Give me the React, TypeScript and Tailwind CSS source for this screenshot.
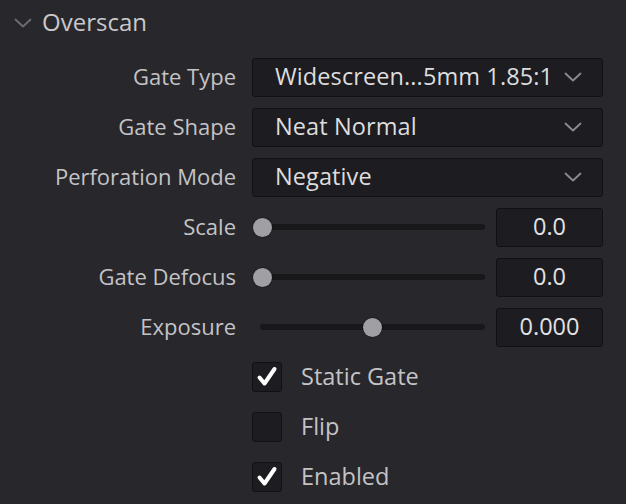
const font = { fontFamily: '"Open Sans", "Noto Sans", sans-serif' };

const Chevron = ({ className }: { className?: string }) => (
  <svg viewBox="0 0 18 10" width="18" height="10" className={className} fill="none" stroke="currentColor" strokeWidth="1.8" strokeLinecap="round" strokeLinejoin="round">
    <path d="M1.5 1.5 L9 8.5 L16.5 1.5" />
  </svg>
);

const Check = () => (
  <svg viewBox="0 0 24 24" width="24" height="24" fill="none" stroke="white" strokeWidth="4" strokeLinecap="round" strokeLinejoin="round">
    <path d="M4.5 12.5 L9.5 18.5 L19.5 4" />
  </svg>
);

const Label = ({ text }: { text: string }) => (
  <div className="w-[236px] shrink-0 -mt-[2px] text-right text-[22px] text-[#c4c3c6]">{text}</div>
);

const Select = ({ value }: { value: string }) => (
  <div className="flex h-[39px] w-[351px] items-center justify-between rounded-[3px] border border-[#111013] bg-[#1d1c20] pl-[22px] pr-[20px]">
    <span className="text-[23.5px] tracking-[0.1px] text-[#dddcdf] whitespace-nowrap">{value}</span>
    <Chevron className="text-[#8c8b8f]" />
  </div>
);

const Slider = ({ pos, value, inset }: { pos: number; value: string; inset?: boolean }) => (
  <div className="flex w-[351px] items-center justify-between">
    <div className="relative flex h-[20px] w-[234px] items-center">
      <div className={`h-[6px] rounded-full bg-[#18171a] ${inset ? "ml-[8px] w-[225px]" : "ml-[3px] w-[230px]"}`} />
      <div
        className="absolute top-[0.5px] h-[19px] w-[19px] rounded-full bg-[#a09fa4] shadow-[0_0_2px_rgba(0,0,0,0.6)]"
        style={{ left: pos }}
      />
    </div>
    <div className="flex h-[39px] w-[107px] items-center justify-center rounded-[3px] border border-[#111013] bg-[#1d1c20] text-[23.5px] text-[#e2e1e4]">
      {value}
    </div>
  </div>
);

const Checkbox = ({ checked, label }: { checked: boolean; label: string }) => (
  <div className="flex items-center gap-[19px]">
    <div className="flex h-[30px] w-[30px] items-center justify-center rounded-[3px] border border-[#111013] bg-[#1d1c20]">
      {checked && <Check />}
    </div>
    <span className="text-[23.5px] text-[#c4c3c6]">{label}</span>
  </div>
);

const App = () => {
  const rows: { label: string; control: React.ReactNode }[] = [
    { label: "Gate Type", control: <Select value="Widescreen...5mm 1.85:1" /> },
    { label: "Gate Shape", control: <Select value="Neat Normal" /> },
    { label: "Perforation Mode", control: <Select value="Negative" /> },
    { label: "Scale", control: <Slider pos={1} value="0.0" /> },
    { label: "Gate Defocus", control: <Slider pos={1} value="0.0" /> },
    { label: "Exposure", control: <Slider pos={111} value="0.000" inset /> },
  ];

  return (
    <div className="h-[504px] w-[626px] overflow-hidden bg-[#28272b]" style={font}>
      {/* Header */}
      <div className="flex h-[44px] items-center gap-[10px] pl-[14px]">
        <Chevron className="text-[#6d6c70] mt-[1px]" />
        <span className="text-[24px] text-[#c9c8cb]">Overscan</span>
      </div>

      <div className="pt-[8px]">
        {rows.map((row, i) => (
          <div key={i} className="flex h-[50px] items-center gap-[16px]">
            <Label text={row.label} />
            {row.control}
          </div>
        ))}
        {[
          { label: "Static Gate", checked: true },
          { label: "Flip", checked: false },
          { label: "Enabled", checked: true },
        ].map((c, i) => (
          <div key={i} className="flex h-[50px] items-center pl-[252px]">
            <Checkbox checked={c.checked} label={c.label} />
          </div>
        ))}
      </div>
    </div>
  );
};

export default App;
